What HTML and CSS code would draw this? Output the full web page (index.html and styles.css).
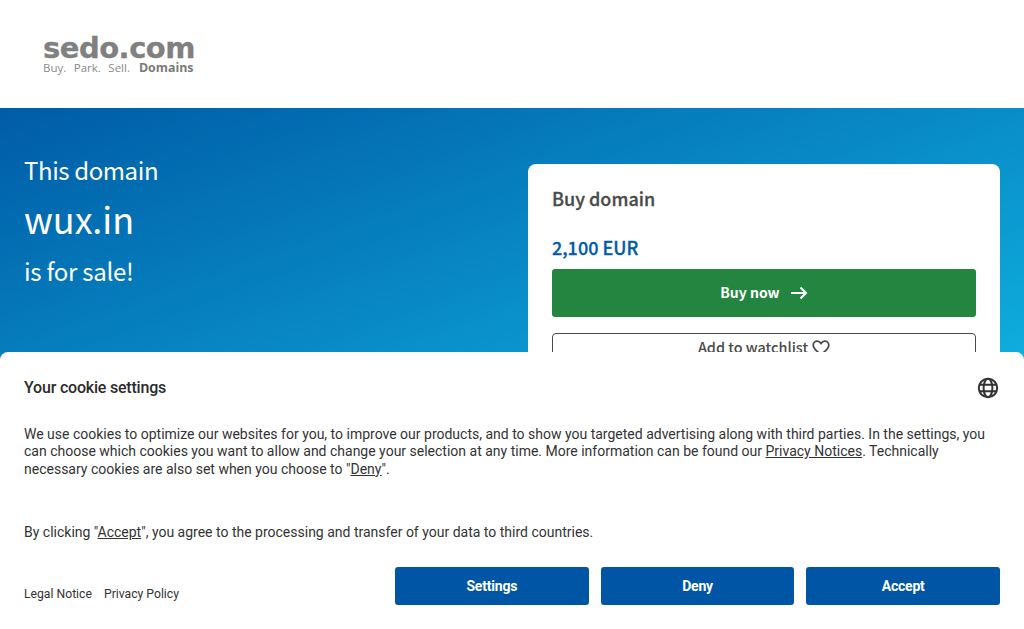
FILE: index.html
```html
<!DOCTYPE html>
<html lang="en">
<head>
<meta charset="utf-8">
<title>wux.in is for sale</title>
<link rel="stylesheet" href="styles.css">
</head>
<body>
<header class="top">
  <a class="logo" href="#">
    <span class="logo-main">sedo.com</span>
    <span class="logo-sub"><span>Buy.</span><span>Park.</span><span>Sell.</span><b>Domains</b></span>
  </a>
</header>
<main class="hero">
  <section class="pitch">
    <p class="pitch-small">This domain</p>
    <h1 class="pitch-domain">wux.in</h1>
    <p class="pitch-sale">is for sale!</p>
  </section>
  <section class="card">
    <h2 class="card-title">Buy domain</h2>
    <p class="price">2,100 EUR</p>
    <button class="btn-buy">Buy now
      <svg class="arrow" width="18" height="14" viewBox="0 0 18 14" fill="none" stroke="currentColor" stroke-width="2"><path d="M1 7h15M10.500 1.500 16 7l-5.500 5.500"/></svg>
    </button>
    <button class="btn-watch">Add to watchlist
      <svg class="heart" width="18" height="16" viewBox="0 0 18 16" fill="none" stroke="currentColor" stroke-width="1.800"><path d="M9 14.500C4 11 1.200 8.500 1.200 5.300 1.200 2.900 3 1.200 5.200 1.200c1.600 0 2.900.8 3.800 2.200.9-1.400 2.200-2.200 3.800-2.200 2.200 0 4 1.700 4 4.100 0 3.200-2.800 5.700-7.800 9.200z"/></svg>
    </button>
  </section>
</main>
<aside class="cookie">
  <div class="cookie-head">
    <h2 class="cookie-title">Your cookie settings</h2>
    <svg class="globe" width="22" height="22" viewBox="0 0 22 22" fill="none" stroke="#333" stroke-width="2"><circle cx="11" cy="11" r="9.200"/><ellipse cx="11" cy="11" rx="4.400" ry="9.200"/><path d="M2.500 7.800h17M2.500 14.200h17"/></svg>
  </div>
  <p class="cookie-text">We use cookies to optimize our websites for you, to improve our products, and to show you targeted advertising along with third parties. In the settings, you can choose which cookies you want to allow and change your selection at any time. More information can be found our <a href="#">Privacy Notices</a>. Technically necessary cookies are also set when you choose to "<a href="#">Deny</a>".</p>
  <p class="cookie-text cookie-accept">By clicking "<a href="#">Accept</a>", you agree to the processing and transfer of your data to third countries.</p>
  <div class="cookie-foot">
    <nav class="cookie-links"><a href="#">Legal Notice</a><a href="#">Privacy Policy</a></nav>
    <div class="cookie-actions">
      <button class="btn-cookie">Settings</button>
      <button class="btn-cookie">Deny</button>
      <button class="btn-cookie">Accept</button>
    </div>
  </div>
</aside>
</body>
</html>
```
FILE: styles.css
```css
* { box-sizing: border-box; }
html, body { margin: 0; height: 100%; overflow: hidden; }
body { font-family: "Noto Sans CJK JP", "Noto Sans", sans-serif; background: #fff; }
h1, h2, p { margin: 0; font-weight: 400; }
button { font-family: inherit; cursor: pointer; }

.top { height: 108px; padding: 35px 0 0 43px; background: #fff; }
.logo { display: inline-flex; flex-direction: column; width: 152px; color: #808080; text-decoration: none; }
.logo-main { font: 700 29px/27px "DejaVu Sans", sans-serif; letter-spacing: -.5px; height: 27px; -webkit-text-stroke: .3px #808080; }
.logo-sub { display: flex; font: 400 11.500px/13px "Open Sans", sans-serif; color: #8a8a8a; margin-top: -1px; }
.logo-sub span { margin-right: 7.500px; }
.logo-sub b { margin-left: auto; margin-right: 1.500px; font-size: 12.400px; font-weight: 700; color: #7a7a7a; }

.hero { height: 521px; padding: 56px 24px 0; display: flex; justify-content: space-between; align-items: flex-start;
  background: linear-gradient(160deg, #005ca6 0%, #0fb0e0 72%); }
.pitch { color: #fff; }
.pitch-small { font-size: 24px; line-height: 30px; letter-spacing: -.4px; margin-top: -9px; }
.pitch-domain { font-size: 36px; line-height: 46px; margin-top: 10px; }
.pitch-sale { font-size: 24px; line-height: 30px; letter-spacing: -.25px; margin-top: 15px; }

.card { width: 472px; height: 300px; background: #fff; border-radius: 8px; padding: 24px; }
.card-title { font-size: 18px; line-height: 22px; font-weight: 500; color: #4a4a4a; margin-top: -1px; -webkit-text-stroke: .3px #4a4a4a; }
.price { font-size: 18px; line-height: 24px; font-weight: 500; color: #005ca6; margin-top: 26px; -webkit-text-stroke: .3px #005ca6; }
.btn-buy { display: flex; align-items: center; justify-content: center; gap: 10px; width: 100%; height: 48px; margin-top: 10px; padding: 0 0 2px;
  border: 0; border-radius: 3px; background: #248540; color: #fff; font-size: 14px; font-weight: 700; }
.arrow { margin-top: 2px; }
.btn-watch { display: flex; align-items: center; justify-content: center; gap: 4px; width: 100%; height: 40px; margin-top: 16px; padding: 0 0 13px;
  border: 1px solid #4a4a4a; border-radius: 4px; background: #fff; color: #4a4a4a; font-size: 14.400px; font-weight: 500; }
.heart { margin-top: 2px; }

.cookie { position: fixed; left: 0; right: 0; bottom: 0; height: 277px; padding: 24px; background: #fff; border-radius: 8px 8px 0 0;
  font-family: Roboto, sans-serif; color: #333; display: flex; flex-direction: column; }
.cookie a { color: inherit; }
.cookie-head { display: flex; justify-content: space-between; align-items: center; height: 23px; }
.cookie-title { font-size: 16px; font-weight: 500; line-height: 23px; letter-spacing: -.2px; color: #2b2b2b; }
.globe { margin-right: 1px; }
.cookie-text { font-size: 14px; line-height: 17.500px; margin-top: 26.700px; }
.cookie-accept { margin-top: 46px; }
.cookie-foot { display: flex; justify-content: space-between; align-items: flex-end; margin-top: auto; }
.cookie-links { display: flex; gap: 12px; font-size: 12.200px; line-height: 14px; padding-bottom: 4px; }
.cookie-links a { text-decoration: none; }
.cookie-actions { display: flex; gap: 12px; }
.btn-cookie { width: 193.670px; height: 38px; border: 0; border-radius: 3px; background: #0056a4; color: #fff; font-family: Roboto, sans-serif; font-size: 14px; font-weight: 700; letter-spacing: -.2px; }
```
